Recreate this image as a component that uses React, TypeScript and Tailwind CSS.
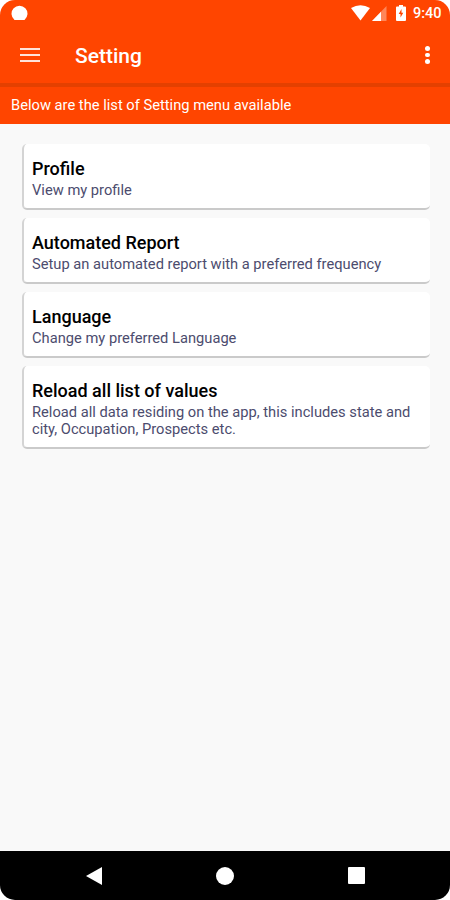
const menuItems = [
  {
    title: 'Profile',
    lines: ['View my profile'],
  },
  {
    title: 'Automated Report',
    lines: ['Setup an automated report with a preferred frequency'],
  },
  {
    title: 'Language',
    lines: ['Change my preferred Language'],
  },
  {
    title: 'Reload all list of values',
    lines: [
      'Reload all data residing on the app, this includes state and',
      'city, Occupation, Prospects etc.',
    ],
  },
];

function StatusBar() {
  return (
    <div className="flex h-7 items-start justify-between pl-[11px] pr-[8px] text-white">
      <svg className="mt-[5px] h-[15px] w-[17px]" viewBox="0 0 17 15" fill="currentColor">
        <path d="M3.5 15A8 8 0 1 1 13.5 15Z" />
      </svg>

      <div className="flex items-start">
        <svg className="mt-[5px] h-4 w-[19px]" viewBox="0 0 19 16" fill="currentColor">
          <path d="M0 3Q9.5-2.6 19 3L9.5 15.5Z" />
        </svg>
        <svg className="ml-[2px] mt-[6px] h-[15px] w-[15px]" viewBox="0 0 15 15" fill="currentColor">
          <path d="M0 15L14.5 0V15Z" opacity="0.35" />
          <path d="M0 15L9 5.7V15Z" />
        </svg>
        <svg className="ml-[9px] mt-[5px] h-4 w-[10px]" viewBox="0 0 10 16">
          <path
            d="M3 0H7V1.6H9Q10 1.6 10 2.6V15Q10 16 9 16H1Q0 16 0 15V2.6Q0 1.6 1 1.6H3Z"
            fill="white"
          />
          <path d="M5.5 4L2.7 9H4.5V12.5L7.3 7.7H5.5Z" fill="#ff4500" />
        </svg>
        <span className="ml-[7px] mt-[6px] w-[29px] whitespace-nowrap text-[14.5px] font-medium leading-4">
          9:40
        </span>
      </div>
    </div>
  );
}

function Toolbar() {
  return (
    <div className="flex h-[55px] items-center pl-5 pr-[20.5px] text-white">
      <button aria-label="Menu" className="mb-[2px] flex w-5 flex-col gap-[4px]">
        <span className="h-[2px] w-full bg-white/85" />
        <span className="h-[2px] w-full bg-white/85" />
        <span className="h-[2px] w-full bg-white/85" />
      </button>
      <h1 className="ml-[35px] flex-1 text-[21px] font-medium leading-6">Setting</h1>
      <button aria-label="More" className="mb-px flex flex-col gap-[2px]">
        <span className="size-[4.5px] rounded-full bg-white" />
        <span className="size-[4.5px] rounded-full bg-white" />
        <span className="size-[4.5px] rounded-full bg-white" />
      </button>
    </div>
  );
}

function NavBar() {
  return (
    <div className="flex h-[49px] items-center justify-between bg-black pl-[86px] pr-[85px]">
      <svg className="h-[18px] w-4" viewBox="0 0 16 18" fill="white">
        <path d="M0 9L16 0V18Z" />
      </svg>
      <span className="size-[18px] rounded-full bg-white" />
      <span className="size-[17px] rounded-[1px] bg-white" />
    </div>
  );
}

export default function App() {
  return (
    <div className="h-[900px] w-[450px] bg-white">
      <div className="flex h-full flex-col overflow-hidden rounded-[15px] bg-[#f9f9f9] font-['Roboto',sans-serif]">
        <header className="bg-[#ff4500]">
          <StatusBar />
          <Toolbar />
          <div className="h-1 bg-[#e44000]" />
          <p className="h-[37px] pl-[11px] pt-[10px] text-[14.7px] leading-4 text-white">
            Below are the list of Setting menu available
          </p>
        </header>

        <main className="flex flex-1 flex-col gap-2 pl-[22px] pr-5 pt-5">
          {menuItems.map((item) => (
            <div
              key={item.title}
              className="rounded-[5px] border-b-2 border-l-2 border-b-[#cacaca] border-l-[#d4d4d4] bg-white pb-[9px] pl-[8px] pt-[14px]"
            >
              <h2 className="mb-[2px] text-[18px] font-medium leading-[22px] text-black">{item.title}</h2>
              {item.lines.map((line) => (
                <p key={line} className="whitespace-nowrap text-[14.7px] leading-[17px] text-[#4c4c6e]">
                  {line}
                </p>
              ))}
            </div>
          ))}
        </main>

        <NavBar />
      </div>
    </div>
  );
}
